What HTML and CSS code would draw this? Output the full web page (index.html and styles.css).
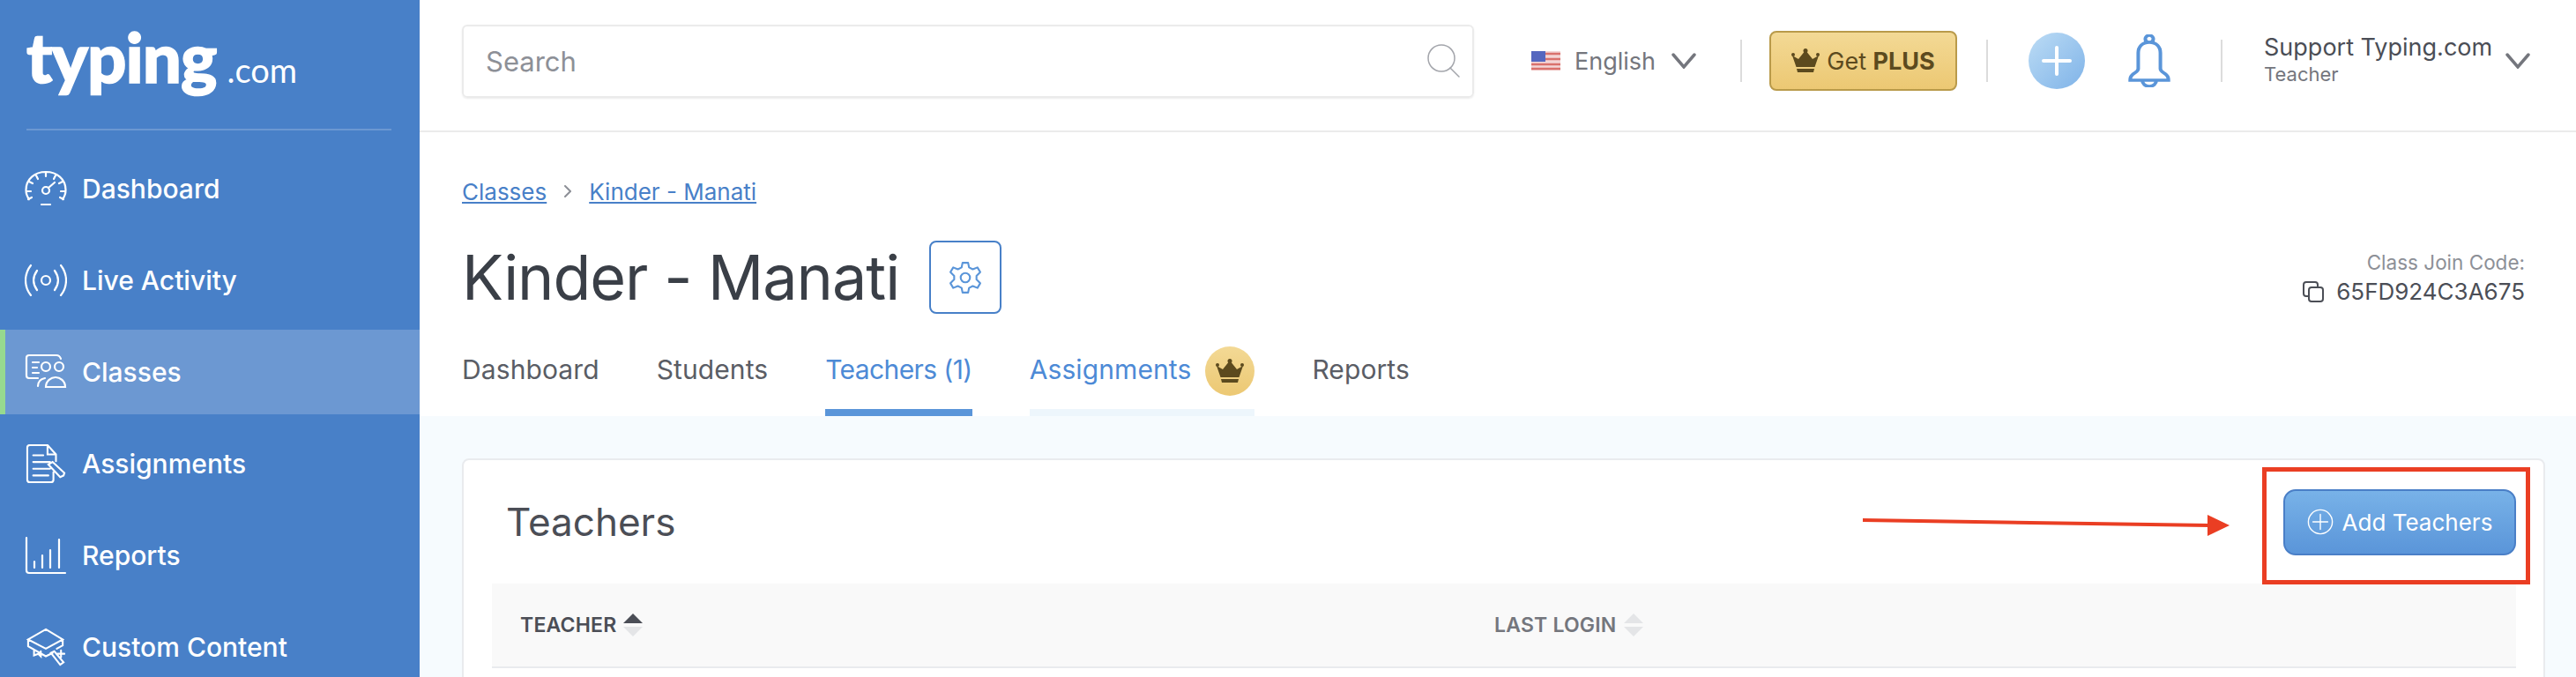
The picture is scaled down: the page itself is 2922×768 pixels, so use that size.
FILE: index.html
```html
<!DOCTYPE html>
<html lang="en">
<head>
    <meta charset="UTF-8">
    <title>Kinder - Manati | Typing.com</title>
    <link rel="stylesheet" href="styles.css">
</head>
<body>
    <aside class="sidebar">
        <div class="logo"><span class="logo-main">typing</span><span class="logo-com">.com</span></div>
        <nav class="side-nav">
            <a class="side-link">
                <svg class="side-icon" viewBox="0 0 48 42"><path d="M5 33C2 29 1.500 26 1.500 22.500 1.500 10 11.500 2 24 2s22.500 8 22.500 20.500c0 3.500-.5 6.500-3.500 10.500M24 3v4M13 6l2 4M35 6l-2 4M5 13l4 2M43 13l-4 2M2 24h5M46 24h-5M4 33l4-2M44 33l-4-2M19 39h10M27 20l7-6"/><circle cx="24" cy="23" r="4"/></svg>
                <span>Dashboard</span>
            </a>
            <a class="side-link">
                <svg class="side-icon" viewBox="0 0 48 42"><circle cx="24" cy="21" r="5"/><path d="M14 10c-5 7-5 15 0 22M34 10c5 7 5 15 0 22M7 4C-1 14-1 28 7 38M41 4c8 10 8 24 0 34"/></svg>
                <span>Live Activity</span>
            </a>
            <a class="side-link active">
                <svg class="side-icon" viewBox="0 0 48 42"><path d="M15 28H5c-2 0-3-1-3-3V5c0-2 1-3 3-3h31c3 0 4 1 5 4M9 10h7M9 16h5M9 22h7"/><circle cx="24" cy="15" r="5"/><circle cx="39" cy="15" r="5"/><path d="M15 37c0-5 3-8 8-9M24 38c0-7 6-11 11-11s11 4 11 11z"/></svg>
                <span>Classes</span>
            </a>
            <a class="side-link">
                <svg class="side-icon" viewBox="0 0 48 46"><path d="M33 33v9c0 2-1 3-3 3H5c-2 0-3-1-3-3V4c0-2 1-3 3-3h21l10 11v8M26 1v11h10M9 13h12M9 21h20M9 29h20M9 37h18M27 24l14 15 4-2 1-3-14-13z"/></svg>
                <span>Assignments</span>
            </a>
            <a class="side-link">
                <svg class="side-icon" viewBox="0 0 48 42"><path d="M2 1v37c0 2 1 3 3 3h41M11 28v7M20 21v14M29 15v20M39 3v32"/></svg>
                <span>Reports</span>
            </a>
            <a class="side-link">
                <svg class="side-icon" viewBox="0 0 48 46"><path d="M24 2L44 14 24 25 3 14zM3 14v8l21 12 8-4M44 14v7l-7 4M3 22l7 4v7l5-2 3 3v-6M30 30l11 14 4-3-11-13zM42 27v8M38 31h8"/></svg>
                <span>Custom Content</span>
            </a>
        </nav>
    </aside>

    <main class="main">
        <header class="topbar">
            <div class="search">
                <span>Search</span>
                <svg class="search-icon" viewBox="0 0 40 40"><circle cx="17" cy="17" r="15"/><path d="M27 28l10 10"/></svg>
            </div>
            <div class="lang">
                <svg class="flag" viewBox="0 0 33 22">
                    <rect width="33" height="22" fill="#f3d6d6"/>
                    <path d="M0 3h33M0 9h33M0 15h33M0 20h33" stroke="#d9716c" stroke-width="2.500"/>
                    <rect width="16" height="12" fill="#5567bf"/>
                </svg>
                <span>English</span>
                <svg class="chev" viewBox="0 0 28 18"><path d="M2 2l12 14L26 2"/></svg>
            </div>
            <div class="top-sep"></div>
            <div class="plus-btn">
                <svg class="crown" viewBox="0 0 32 28"><path d="M7 27h18l1-4H6zM5.500 21h21L31 8l-7 4-8-10-8 10-7-4z"/><circle cx="16" cy="2.500" r="2.500"/><circle cx="2" cy="7" r="2"/><circle cx="30" cy="7" r="2"/></svg>
                <span>Get <b>PLUS</b></span>
            </div>
            <div class="top-sep"></div>
            <div class="add-circle">
                <svg viewBox="0 0 34 34"><path d="M17 2v30M2 17h30"/></svg>
            </div>
            <svg class="bell" viewBox="3 0 42 60" preserveAspectRatio="none"><path d="M24 9c-7 0-11 5-11 12v18c0 3-3 4-6 7-2 2-2 4-2 6h38c0-2 0-4-2-6-3-3-6-4-6-7V21c0-7-4-12-11-12zM24 9c-3 0-4-2-4-4s2-4 4-4 4 2 4 4-1 4-4 4zM17 52c0 4 3 7 7 7s7-3 7-7"/></svg>
            <div class="top-sep"></div>
            <div class="user">
                <div class="user-name">Support Typing.com</div>
                <div class="user-role">Teacher</div>
            </div>
            <svg class="chev" viewBox="0 0 28 18"><path d="M2 2l12 14L26 2"/></svg>
        </header>

        <section class="class-head">
            <div class="crumbs">
                <a>Classes</a>
                <svg class="crumb-sep" viewBox="0 0 8 14"><path d="M1 1l6 6-6 6"/></svg>
                <a>Kinder - Manati</a>
            </div>
            <div class="title-row">
                <h1>Kinder - Manati</h1>
                <div class="gear-btn">
                    <svg viewBox="0 0 36 36"><path d="M15 2h6l1 5 4 2 5-2 3 5-4 4v4l4 4-3 5-5-2-4 2-1 5h-6l-1-5-4-2-5 2-3-5 4-4v-4L2 12l3-5 5 2 4-2z" stroke-linejoin="round"/><circle cx="18" cy="18" r="5"/></svg>
                </div>
                <div class="join-code">
                    <div class="join-label">Class Join Code:</div>
                    <div class="join-value">
                        <svg class="copy-icon" viewBox="0 0 24 24"><rect x="7" y="7" width="16" height="16" rx="3"/><path d="M7 17H4c-2 0-3-1-3-3V4c0-2 1-3 3-3h10c2 0 3 1 3 3v3"/></svg>
                        <span>65FD924C3A675</span>
                    </div>
                </div>
            </div>
            <div class="tabs">
                <a class="tab">Dashboard</a>
                <a class="tab">Students</a>
                <a class="tab current">Teachers (1)</a>
                <a class="tab locked">Assignments
                    <span class="crown-badge"><svg class="crown" viewBox="0 0 32 28"><path d="M7 27h18l1-4H6zM5.500 21h21L31 8l-7 4-8-10-8 10-7-4z"/><circle cx="16" cy="2.500" r="2.500"/><circle cx="2" cy="7" r="2"/><circle cx="30" cy="7" r="2"/></svg></span>
                </a>
                <a class="tab">Reports</a>
            </div>
        </section>

        <section class="content">
            <div class="card">
                <div class="card-head">
                    <h2>Teachers</h2>
                    <div class="add-btn">
                        <svg viewBox="0 0 32 32"><circle cx="16" cy="16" r="14.500"/><path d="M16 7v18M7 16h18"/></svg>
                        <span>Add Teachers</span>
                    </div>
                </div>
                <div class="table-head">
                    <div class="col-teacher">TEACHER
                        <span class="sort"><i class="up on"></i><i class="down"></i></span>
                    </div>
                    <div class="col-login">LAST LOGIN
                        <span class="sort"><i class="up"></i><i class="down"></i></span>
                    </div>
                </div>
            </div>
        </section>
    </main>

    <!-- red annotation drawn over the screenshot -->
    <svg class="annotation" viewBox="0 0 2922 768">
        <rect x="2568.500" y="532.500" width="299" height="128" fill="none" stroke="#ea3e23" stroke-width="5"/>
        <path d="M2113 590L2506 596" stroke="#ea3e23" stroke-width="4"/>
        <path d="M2504 584L2529 596 2504 608z" fill="#ea3e23"/>
    </svg>
</body>
</html>
```

FILE: styles.css
```css
html, body {
    margin: 0;
    height: 768px;
    overflow: hidden;
}

body {
    display: flex;
    font-family: Inter, "Open Sans", sans-serif;
    color: #4b4e56;
    background: #fff;
}

svg {
    fill: none;
    stroke: currentColor;
    stroke-width: 2;
    stroke-linecap: round;
}

/* sidebar */
.sidebar {
    width: 476px;
    height: 768px;
    overflow: hidden;
    flex-shrink: 0;
    background: #4880c8;
    color: #fff;
}

.logo {
    height: 146px;
    margin: 0 32px 0 30px;
    border-bottom: 2px solid #6c98d2;
    display: flex;
    align-items: baseline;
    line-height: 128px;
}

.logo-main {
    font-family: Lato, sans-serif;
    font-weight: 900;
    font-size: 78px;
    letter-spacing: -1px;
    -webkit-text-stroke: 1.500px #fff;
}

.logo-com {
    font-family: Lato, sans-serif;
    font-size: 38px;
    margin-left: 12px;
}

.side-nav {
    display: flex;
    flex-direction: column;
    gap: 8px;
    padding-top: 18px;
}

.side-link {
    height: 96px;
    flex-shrink: 0;
    display: flex;
    align-items: center;
    gap: 17px;
    padding-left: 28px;
    font-size: 30px;
    font-weight: 500;
}

.side-link.active {
    background: #6c98d2;
    border-left: 6px solid #96d98f;
    padding-left: 22px;
}

.side-icon {
    width: 48px;
    height: 44px;
    stroke-width: 2.200;
}

/* top bar */
.main {
    flex: 1;
    min-width: 0;
    height: 768px;
    overflow: hidden;
    display: flex;
    flex-direction: column;
}

.topbar {
    height: 138px;
    flex-shrink: 0;
    border-bottom: 2px solid #ebebeb;
    display: flex;
    align-items: center;
    padding: 0 0 10px 48px;
    font-size: 27px;
}

.search {
    width: 1148px;
    height: 83px;
    box-sizing: border-box;
    border: 2px solid #ebebeb;
    border-radius: 6px;
    box-shadow: 0 1px 2px rgba(0, 0, 0, 0.08);
    display: flex;
    align-items: center;
    justify-content: space-between;
    padding: 0 12px 0 25px;
    color: #8d9097;
    font-size: 31px;
}

.search-icon {
    width: 40px;
    height: 40px;
    stroke: #a3a5ab;
    stroke-width: 1.500;
}

.lang {
    display: flex;
    align-items: center;
    margin-left: 65px;
    color: #74767d;
}

.flag {
    width: 33px;
    height: 22px;
    stroke: none;
    margin-right: 16px;
}

.chev {
    width: 28px;
    height: 18px;
    color: #74767d;
    stroke-width: 3.500;
}

.lang .chev {
    margin-left: 18px;
}

.top-sep {
    width: 2px;
    height: 48px;
    background: #dcdcdc;
}

.lang + .top-sep {
    margin-left: 50px;
}

.plus-btn {
    width: 213px;
    height: 68px;
    box-sizing: border-box;
    margin: 0 33px 0 31px;
    border: 2px solid #b99a4a;
    border-radius: 8px;
    background: linear-gradient(#f3d995, #ecc873);
    color: #5c4a1e;
    display: flex;
    align-items: center;
    justify-content: center;
    gap: 8px;
    font-size: 27px;
}

.crown {
    width: 32px;
    height: 28px;
    fill: #5c4a1e;
    stroke: none;
}

.add-circle {
    width: 64px;
    height: 64px;
    border-radius: 50%;
    margin-left: 46px;
    background: linear-gradient(135deg, #bcdcf5, #7fb3e8);
    display: flex;
    align-items: center;
    justify-content: center;
    color: #fff;
}

.add-circle svg {
    width: 34px;
    height: 34px;
    stroke-width: 4;
}

.bell {
    width: 48px;
    height: 60px;
    margin: 0 57px 0 49px;
    color: #5a95d9;
    stroke-width: 3.500;
}

.user {
    margin-left: 47px;
    width: 274px;
    line-height: 30px;
}

.user-name {
    color: #4b4e56;
}

.user-role {
    color: #74767d;
    font-size: 22px;
}

/* class header */
.class-head {
    height: 322px;
    flex-shrink: 0;
    box-sizing: border-box;
    padding: 0 58px 0 48px;
    display: flex;
    flex-direction: column;
}

.crumbs {
    margin-top: 50px;
    height: 34px;
    display: flex;
    align-items: center;
    font-size: 26px;
    color: #4880c8;
}

.crumbs a {
    text-decoration: underline;
}

.crumb-sep {
    width: 8px;
    height: 14px;
    margin: 0 20px;
    color: #8d9097;
}

.title-row {
    margin-top: 39px;
    height: 83px;
    display: flex;
    align-items: center;
}

h1 {
    margin: 0;
    font-size: 70px;
    letter-spacing: -1px;
    font-weight: 400;
    color: #3a3f47;
}

.gear-btn {
    width: 82px;
    height: 83px;
    box-sizing: border-box;
    margin-left: 34px;
    border: 2px solid #4880c8;
    border-radius: 8px;
    display: flex;
    align-items: center;
    justify-content: center;
    color: #5a95d9;
}

.gear-btn svg {
    width: 38px;
    height: 40px;
}

.join-code {
    margin-left: auto;
    text-align: right;
}

.join-label {
    color: #8d9097;
    font-size: 22.500px;
    line-height: 32px;
}

.join-value {
    display: flex;
    align-items: center;
    justify-content: flex-end;
    gap: 14px;
    font-size: 26px;
    line-height: 34px;
}

.copy-icon {
    width: 24px;
    height: 24px;
}

.tabs {
    margin-top: auto;
    display: flex;
    gap: 65px;
    font-size: 30px;
    letter-spacing: 0.1px;
}

.tab {
    height: 80px;
    box-sizing: border-box;
    padding-top: 9px;
    display: flex;
    gap: 16px;
    border-bottom: 8px solid transparent;
    color: #5a5d65;
}

.tab.current {
    color: #4d8ad6;
    letter-spacing: -0.6px;
    border-bottom-color: #5a95d9;
}

.tab.locked {
    color: #4d8ad6;
    border-bottom-color: #edf6fc;
}

.crown-badge {
    width: 56px;
    height: 56px;
    margin-top: -8px;
    border-radius: 50%;
    background: linear-gradient(#f3d995, #ecc873);
    display: flex;
    align-items: center;
    justify-content: center;
}

/* teachers card */
.content {
    flex: 1;
    min-height: 0;
    overflow: hidden;
    background: #f6fbfe;
    padding: 48px 35px 0 48px;
}

.card {
    height: 400px;
    box-sizing: border-box;
    padding: 0 31px 0 32px;
    background: #fff;
    border: 2px solid #e9ebee;
    border-radius: 8px;
}

.card-head {
    height: 140px;
    display: flex;
    align-items: center;
    justify-content: space-between;
    padding-left: 16px;
}

h2 {
    margin: 0;
    font-size: 44px;
    font-weight: 400;
    color: #4b4e56;
}

.add-btn {
    width: 264px;
    height: 75px;
    box-sizing: border-box;
    border: 2px solid #4a7fc7;
    border-radius: 14px;
    background: linear-gradient(#78b2e8, #5a95d9);
    display: flex;
    align-items: center;
    justify-content: center;
    gap: 10px;
    color: #fff;
    font-size: 26px;
    white-space: nowrap;
}

.add-btn svg {
    width: 30px;
    height: 30px;
    stroke-width: 1.500;
}

.table-head {
    height: 96px;
    box-sizing: border-box;
    border-bottom: 2px solid #e9ebee;
    background: #f9f9f9;
    display: flex;
    align-items: center;
    padding-left: 32px;
    font-size: 23px;
    font-weight: 600;
    letter-spacing: 0.2px;
}

.col-teacher {
    width: 1105px;
    display: flex;
    align-items: center;
    gap: 8px;
}

.col-login {
    display: flex;
    align-items: center;
    gap: 8px;
    color: #74767d;
}

.sort {
    display: flex;
    flex-direction: column;
    gap: 4px;
}

.sort i {
    display: block;
    width: 0;
    height: 0;
    border-left: 11.500px solid transparent;
    border-right: 11.500px solid transparent;
}

.sort .up {
    border-bottom: 11px solid #e4e5e7;
}

.sort .down {
    border-top: 11px solid #e4e5e7;
}

.sort .up.on {
    border-bottom-color: #4b4e56;
}

.annotation {
    position: absolute;
    left: 0;
    top: 0;
    width: 2922px;
    height: 768px;
    stroke: none;
    stroke-linecap: butt;
    pointer-events: none;
}
```
